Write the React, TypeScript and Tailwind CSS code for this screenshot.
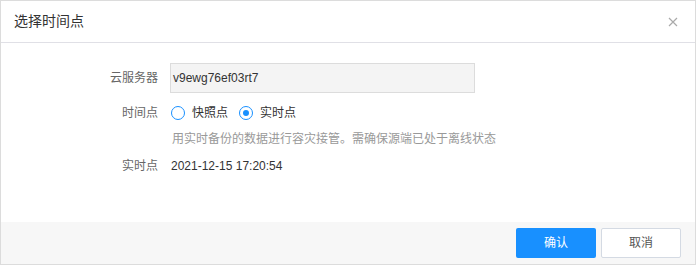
import { useState } from 'react';

const FONT = { fontFamily: '"Liberation Sans", "Noto Sans CJK SC", sans-serif' };

function Radio({ checked, label, onClick }: { checked: boolean; label: string; onClick: () => void }) {
  return (
    <button type="button" onClick={onClick} className="flex items-center gap-[7px] text-[12px] text-[#333]">
      <span className="flex h-[14px] w-[14px] items-center justify-center rounded-full border border-[#1890ff] bg-white">
        {checked && <span className="h-[6px] w-[6px] rounded-full bg-[#1890ff]" />}
      </span>
      <span className="leading-none">{label}</span>
    </button>
  );
}

export default function App() {
  const [mode, setMode] = useState<'snapshot' | 'realtime'>('realtime');

  return (
    <div style={FONT} className="flex h-[265px] w-[696px] flex-col border border-[#dcdcdc] bg-white">
      {/* header */}
      <div className="flex h-[42px] shrink-0 items-center justify-between border-b border-[#e0e0e6] pl-[13px] pr-[17px]">
        <span className="text-[14px] text-[#333]">选择时间点</span>
        <svg width="10" height="10" viewBox="0 0 10 10" className="text-[#aaa]">
          <path d="M1 1 L9 9 M9 1 L1 9" stroke="currentColor" strokeWidth="1.2" />
        </svg>
      </div>

      {/* body */}
      <div className="flex-1 pt-[20px] text-[12px]">
        <div className="flex h-[30px] items-center">
          <span className="w-[157px] text-right text-[#666]">云服务器</span>
          <div className="ml-[12px] flex h-[30px] w-[305px] items-center border border-[#dcdcdc] bg-[#f4f4f4] px-[2px] text-[#333]">
            v9ewg76ef03rt7
          </div>
        </div>

        <div className="mt-[10px] flex h-[20px] items-center">
          <span className="w-[157px] text-right text-[#666]">时间点</span>
          <div className="ml-[13px] flex items-center gap-[11px]">
            <Radio checked={mode === 'snapshot'} label="快照点" onClick={() => setMode('snapshot')} />
            <Radio checked={mode === 'realtime'} label="实时点" onClick={() => setMode('realtime')} />
          </div>
        </div>

        <div className="mt-[8px] flex h-[16px] items-center pl-[171px] text-[#999]">
          用实时备份的数据进行容灾接管。需确保源端已处于离线状态
        </div>

        <div className="mt-[9px] flex h-[20px] items-center">
          <span className="w-[157px] text-right text-[#666]">实时点</span>
          <span className="ml-[13px] text-[#333]">2021-12-15 17:20:54</span>
        </div>
      </div>

      {/* footer */}
      <div className="flex h-[42px] shrink-0 items-center justify-end gap-[5px] bg-[#f7f7f7] pr-[14px]">
        <button type="button" className="h-[30px] w-[80px] rounded-[2px] bg-[#1890ff] text-[12px] text-white">
          确认
        </button>
        <button type="button" className="h-[30px] w-[80px] rounded-[2px] border border-[#d4dae3] bg-white text-[12px] text-[#555]">
          取消
        </button>
      </div>
    </div>
  );
}
